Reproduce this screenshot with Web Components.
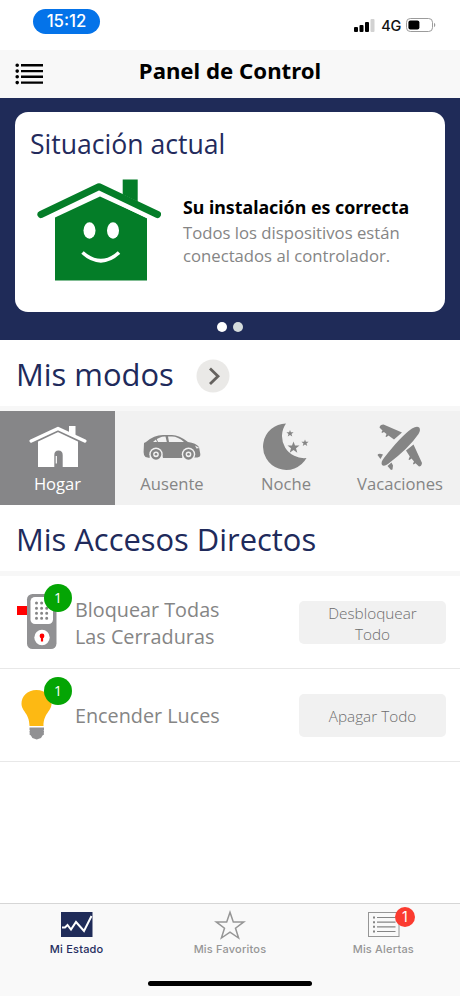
<!DOCTYPE html>
<html lang="es">
<head>
<meta charset="utf-8">
<meta name="viewport" content="width=device-width, initial-scale=1">
<title>Panel de Control</title>
<style>
  body {
    margin: 0;
    background: #fff;
    font-family: "Open Sans", "Noto Sans", sans-serif;
  }
</style>
</head>
<body>
<control-panel></control-panel>

<script>
"use strict";

function define(name, html) {
  const template = document.createElement('template');
  template.innerHTML = html;
  window.customElements.define(name, class extends HTMLElement {
    constructor() {
      super();
      this.attachShadow({ mode: 'open' });
      this.shadowRoot.appendChild(template.content.cloneNode(true));
    }
  });
}

define('status-bar', `
<style>
  :host {
    display: flex;
    justify-content: space-between;
    box-sizing: border-box;
    height: 50px;
    padding: 9px 24px 0 33px;
    font-family: Inter, sans-serif;
  }
  .time {
    width: 67px;
    height: 25px;
    border-radius: 13px;
    background: #0473e9;
    color: #fff;
    font-size: 16.8px;
    font-weight: 500;
    line-height: 25px;
    text-align: center;
  }
  .signals {
    display: flex;
    align-items: center;
    height: 33px;
    color: #111;
    font-size: 14.5px;
    font-weight: 500;
  }
  .signals svg { margin-bottom: 1px; }
  .network { margin: 0 5px 0 6px; letter-spacing: -0.3px; }
</style>
<div class="time">15:12</div>
<div class="signals">
  <svg width="21" height="13" viewBox="0 0 21 13">
    <rect x="0" y="8" width="4" height="5" rx="1"/>
    <rect x="5.5" y="6" width="4" height="7" rx="1"/>
    <rect x="11" y="3" width="4" height="10" rx="1"/>
    <rect x="16.5" y="0" width="4" height="13" rx="1" fill="#d2d2d2"/>
  </svg>
  <span class="network">4G</span>
  <svg width="30" height="14" viewBox="0 0 30 14">
    <rect x="0.5" y="0.5" width="26" height="13" rx="3.8" fill="none" stroke="#9b9b9b"/>
    <rect x="2.4" y="2.4" width="11" height="9.2" rx="2"/>
    <path d="M28 4.8v4.4c1.8-.7 1.8-3.7 0-4.4z" fill="#9b9b9b"/>
  </svg>
</div>
`);

define('nav-bar', `
<style>
  :host {
    display: grid;
    grid-template-columns: 44px 1fr 44px;
    align-items: center;
    height: 48px;
    background: #f8f8f8;
    color: #000;
  }
  svg { margin: 0 0 1px 15px; }
  h1 {
    margin: 0;
    padding-bottom: 6px;
    font-family: "Noto Sans", sans-serif;
    font-size: 22.2px;
    font-weight: 700;
    line-height: 30px;
    text-align: center;
    white-space: nowrap;
  }
</style>
<svg width="29" height="22" viewBox="0 0 29 22">
  <g stroke="#000" stroke-width="2.4">
    <path d="M6 2.3h22M6 8.1h22M6 13.8h22M6 19.6h22"/>
    <path d="M2.2 2.3h.01M2.2 8.1h.01M2.2 13.8h.01M2.2 19.6h.01" stroke-width="3.6" stroke-linecap="round"/>
  </g>
</svg>
<h1><slot></slot></h1>
`);

define('status-card', `
<style>
  :host {
    display: flex;
    flex-direction: column;
    align-items: center;
    box-sizing: border-box;
    height: 242px;
    padding: 14px 15px 0;
    background: #1f2b58;
  }
  .card {
    box-sizing: border-box;
    width: 100%;
    height: 200px;
    padding: 12px 15px 0;
    border-radius: 13px;
    background: #fff;
  }
  h2 {
    margin: 0;
    color: #232a5c;
    font-size: 26.6px;
    font-weight: 400;
    line-height: 40px;
  }
  .content {
    display: flex;
    padding: 15px 0 0 7px;
  }
  .text {
    padding: 17px 0 0 22px;
    color: #858585;
    font-size: 16.7px;
    line-height: 23px;
    white-space: nowrap;
  }
  .title {
    padding-bottom: 2px;
    color: #000;
    font-family: "Noto Sans", sans-serif;
    font-size: 17.8px;
    font-weight: 700;
  }
  .pages {
    display: flex;
    gap: 6px;
    margin-top: 10px;
  }
  .pages i {
    width: 10px;
    height: 10px;
    border-radius: 50%;
    background: #d5dcdc;
  }
  .pages .current { background: #fff; }
</style>
<div class="card">
  <h2><slot name="heading"></slot></h2>
  <div class="content">
    <svg width="124" height="103" viewBox="0 0 124 103">
      <path d="M18 38.5L63 17.500L110 39v62.500H18z" fill="#047d28"/>
      <path d="M4 36.500L62 8.200L120 36.500" fill="none" stroke="#fff" stroke-width="14"/>
      <path d="M85.700.500h15v22l-15-7z" fill="#047d28"/>
      <path d="M3.900 35.500L62 7.700L120.500 35.500" fill="none" stroke="#047d28" stroke-width="7" stroke-linecap="round" stroke-linejoin="round"/>
      <g fill="#fff">
        <ellipse cx="52.500" cy="51.500" rx="6" ry="8.200"/>
        <ellipse cx="76" cy="51.500" rx="6" ry="8.200"/>
      </g>
      <path d="M45.500 73.500Q64 90 82 73.500" fill="none" stroke="#fff" stroke-width="3.600"/>
    </svg>
    <div class="text">
      <div class="title"><slot name="title"></slot></div>
      <slot></slot>
    </div>
  </div>
</div>
<div class="pages"><i class="current"></i><i></i></div>
`);

define('section-heading', `
<style>
  :host {
    display: flex;
    align-items: center;
    box-sizing: border-box;
    height: 71px;
    padding: 1px 16px 0;
    border-bottom: 5px solid #f7f7f7;
    color: #202a5b;
  }
  h2 {
    margin: 0;
    font-size: 30.9px;
    font-weight: 400;
    line-height: 44px;
    white-space: nowrap;
  }
</style>
<h2><slot></slot></h2>
<slot name="action"></slot>
`);

define('round-arrow', `
<style>
  :host {
    display: block;
    width: 34px;
    height: 34px;
    margin: 4px 0 0 22px;
  }
  svg { display: block; }
</style>
<svg width="34" height="34" viewBox="0 0 34 34">
  <circle cx="17" cy="17" r="16.500" fill="#eae9e7"/>
  <path d="M14 9.500L22 17.200L14 25" fill="none" stroke="#65625f" stroke-width="2.800"/>
</svg>
`);

define('mode-list', `
<style>
  :host {
    display: grid;
    grid-template-columns: 115px 114px 114px 114px;
    height: 94px;
    background: #f1f1f1;
  }
</style>
<slot></slot>
`);

define('mode-item', `
<style>
  :host {
    display: flex;
    flex-direction: column;
    align-items: center;
    padding-top: 10px;
    color: #858585;
    font-size: 16.6px;
    line-height: 24px;
  }
  :host([active]) {
    background: #868688;
    color: #fff;
  }
  .icon {
    height: 51px;
  }
</style>
<div class="icon"><slot name="icon"></slot></div>
<slot></slot>
`);

define('shortcut-row', `
<style>
  :host {
    display: grid;
    grid-template-columns: 75px 1fr 147px;
    align-items: center;
    box-sizing: border-box;
    height: 93px;
    padding-right: 14px;
    border-bottom: 1px solid #e8e8e8;
    color: #858585;
  }
  .icon {
    position: relative;
    align-self: start;
    height: 92px;
  }
  .badge {
    position: absolute;
    left: 44px;
    top: 8px;
    width: 28px;
    height: 28px;
    border-radius: 50%;
    background: #04a504;
    color: #fff;
    font-size: 14px;
    line-height: 28px;
    text-align: center;
  }
  .label {
    padding-top: 1px;
    font-size: 19.800px;
    font-weight: 400;
    line-height: 27px;
  }
  button {
    height: 43px;
    padding: 2px 20px 0;
    border: none;
    border-radius: 5px;
    background: #f1f1f1;
    color: #6d6d6d;
    font-family: inherit;
    font-size: 15.300px;
    font-weight: 300;
    line-height: 21px;
  }
</style>
<div class="icon"><slot name="icon"></slot><div class="badge">1</div></div>
<div class="label"><slot></slot></div>
<button><slot name="action"></slot></button>
`);

define('tab-bar', `
<style>
  :host {
    display: flex;
    flex-direction: column;
    align-items: center;
    box-sizing: border-box;
    height: 93px;
    border-top: 1px solid #d6d6d6;
    background: #f9f9f9;
  }
  .tabs {
    display: grid;
    grid-template-columns: repeat(3, 1fr);
    width: 100%;
    height: 77px;
  }
  .home {
    width: 164px;
    height: 5px;
    border-radius: 3px;
    background: #000;
  }
</style>
<div class="tabs"><slot></slot></div>
<div class="home"></div>
`);

define('tab-item', `
<style>
  :host {
    display: flex;
    flex-direction: column;
    align-items: center;
    padding-top: 6px;
    color: #969696;
    font-family: Inter, sans-serif;
    font-size: 11px;
    font-weight: 500;
    letter-spacing: 0.200px;
    line-height: 14px;
  }
  :host([active]) { color: #252d60; }
  .icon {
    position: relative;
    height: 32px;
  }
  ::slotted([slot="badge"]) {
    position: absolute;
    left: 28px;
    top: -3px;
    width: 20px;
    height: 20px;
    border-radius: 50%;
    background: #fb3b30;
    color: #fff;
    font-size: 14px;
    font-weight: 400;
    letter-spacing: 0;
    line-height: 20px;
    text-align: center;
  }
</style>
<div class="icon"><slot name="icon"></slot><slot name="badge"></slot></div>
<slot></slot>
`);

define('control-panel', `
<style>
  :host {
    display: flex;
    flex-direction: column;
    height: 996px;
    overflow: hidden;
  }
  svg { display: block; }
  .shortcuts { flex: 1; }
</style>
<status-bar></status-bar>
<nav-bar>Panel de Control</nav-bar>
<status-card>
  <span slot="heading">Situación actual</span>
  <span slot="title">Su instalación es correcta</span>
  Todos los dispositivos están<br>conectados al controlador.
</status-card>

<section-heading>Mis modos<round-arrow slot="action"></round-arrow></section-heading>
<mode-list>
  <mode-item active>
    <svg slot="icon" width="58" height="50" viewBox="0 0 58 50">
      <path d="M9 19L29 9.500L49 19v27H33.700V34q0-4.500-4.200-4.500T25.300 34v12H9z" fill="#fff"/>
      <path d="M2 20.500L29 7.800L56 20.500" fill="none" stroke="#868688" stroke-width="6"/>
      <path d="M40 5h6.500v11L40 13z" fill="#fff"/>
      <path d="M2.200 20L29 7.500L55.800 20" fill="none" stroke="#fff" stroke-width="3.400" stroke-linecap="round" stroke-linejoin="round"/>
      <path d="M27.300 35v7.500" stroke="#fff" stroke-width="1.200"/>
    </svg>
    Hogar
  </mode-item>
  <mode-item>
    <svg slot="icon" width="58" height="50" viewBox="0 0 58 50">
      <path d="M1 22L3 21Q11 14 20 14h9q7 0 16 7 8 1 11 5l1.300 7q.500 3-3 3.500h-3.500A6.700 6.700 0 0 0 39 37H20A6.700 6.700 0 0 0 6.500 37L2.500 36Q.500 34.500.600 31z" fill="#858585"/>
      <path d="M10 21Q16 15.300 22.500 15.500L23.800 21zM25 15.500h4q6 0 12 5.500H26z" fill="#f1f1f1"/>
      <path d="M12.500 16.500L14.500 21M52 25.500l4 2.500" stroke="#858585"/>
      <path d="M52 24.500l4.500 2.500-3 .5z" fill="#f1f1f1"/>
      <circle cx="13" cy="33.300" r="6.700" fill="#f1f1f1"/>
      <circle cx="45.500" cy="33.300" r="6.700" fill="#f1f1f1"/>
      <circle cx="13" cy="33.300" r="4.100" fill="none" stroke="#858585" stroke-width="2.500"/>
      <circle cx="45.500" cy="33.300" r="4.100" fill="none" stroke="#858585" stroke-width="2.500"/>
      <circle cx="13" cy="33.300" r="1.300" fill="#858585"/>
      <circle cx="45.500" cy="33.300" r="1.300" fill="#858585"/>
    </svg>
    Ausente
  </mode-item>
  <mode-item>
    <svg slot="icon" width="46" height="50" viewBox="0 0 46 50" fill="#858585">
      <path d="M23 2.500A23.200 23.200 0 1 0 43.500 37A22 22 0 0 1 23 2.500z"/>
      <path d="M0-6L1.500-2H6L2.500.800L3.800 5.200L0 2.600L-3.800 5.200L-2.500.800L-6-2H-1.500z" transform="translate(30.500 26.500)"/>
      <path d="M0-6L1.500-2H6L2.500.800L3.800 5.200L0 2.600L-3.800 5.200L-2.500.800L-6-2H-1.500z" transform="translate(27 12.500) scale(.6)"/>
      <path d="M0-6L1.500-2H6L2.500.800L3.800 5.200L0 2.600L-3.800 5.200L-2.500.800L-6-2H-1.500z" transform="translate(42 22) scale(.6)"/>
    </svg>
    Noche
  </mode-item>
  <mode-item>
    <svg slot="icon" width="46" height="50" viewBox="0 0 46 50" fill="#858585">
      <path d="M5 44Q3.500 41 7 37Q24 15 35 7.500Q40 4.500 42.200 6.500Q44 9 41.500 13Q32 27 11 43Q7 46 5 44z"/>
      <path d="M2.500 6.500Q3 3.500 6.500 3.500L25 11.500L17 18.500L11.500 14.500 9.500 16 8.500 15.500 9.500 13L7 11 5 12 4.500 11 5.500 9.500z"/>
      <path d="M36.500 23.500L45 42Q44.500 45.500 42 45.500L38.500 42.200 36.500 43.500 36 42.500 37 40.500 34.500 37.500 32.500 39 31.500 38.500 32.800 35.500 29 29.500z"/>
      <path d="M.5 34q1-2 5.500-.500l-2.500 4.500zM10.500 45l4-3.500 1.500 3-.5 4-1.500.5z"/>
    </svg>
    Vacaciones
  </mode-item>
</mode-list>

<section-heading>Mis Accesos Directos</section-heading>
<div class="shortcuts">
  <shortcut-row>
    <svg slot="icon" width="75" height="92" viewBox="0 0 75 92">
      <path d="M17 30h11v9H17z" fill="#f00"/>
      <rect x="27" y="18" width="29.500" height="55" rx="5.500" fill="#919193"/>
      <rect x="30.500" y="21" width="22.500" height="27" rx="4.500" fill="#fff"/>
      <g stroke="#858585" stroke-width="3" stroke-linecap="round" stroke-dasharray="0 5.100">
        <path d="M36.500 27h11M36.500 32.200h11M36.500 37.300h11M36.500 42.200h11"/>
      </g>
      <circle cx="42" cy="61.500" r="7.700" fill="#fff"/>
      <circle cx="42" cy="60" r="2.400" fill="#f00"/>
      <path d="M42 60v5.500" stroke="#f00" stroke-width="2.200"/>
    </svg>
    Bloquear Todas<br>Las Cerraduras
    <span slot="action">Desbloquear<br>Todo</span>
  </shortcut-row>
  <shortcut-row>
    <svg slot="icon" width="75" height="92" viewBox="0 0 75 92">
      <path d="M36.500 21C27 21 21.500 27.500 21.500 34.500C21.500 42.500 29.500 44 29.500 57H43.500C43.500 44 51.500 42.500 51.500 34.500C51.500 27.500 46 21 36.500 21z" fill="#fdb913"/>
      <path d="M29.500 58.500H44v7l-1.500 1-1.500 2.500-4.300 1.500-4.300-1.500-1.500-2.500-1.400-1z" fill="#919193"/>
      <path d="M29 61.500h1M29 64h1M43.500 61.500h1M43.500 64h1" stroke="#fff" stroke-width=".6"/>
    </svg>
    Encender Luces
    <span slot="action">Apagar Todo</span>
  </shortcut-row>
</div>

<tab-bar>
  <tab-item active>
    <svg slot="icon" width="33" height="30" viewBox="0 0 33 30">
      <path d="M1 2h31.500v25H1z" fill="#1f2b58"/>
      <path d="M2 17.500h3l2.500-2.500 3.500 4.500 5-7.500 8 9L31.500 6" fill="none" stroke="#fff" stroke-width="2"/>
    </svg>
    Mi Estado
  </tab-item>
  <tab-item>
    <svg slot="icon" width="32" height="30" viewBox="0 0 32 30">
      <path d="M16 2.300L19.300 11.900H29.800L21.500 18.200L24.600 28L16 22.200L7.400 28L10.500 18.200L2.200 11.900H12.700z" fill="none" stroke="#969696" stroke-width="1.500"/>
    </svg>
    Mis Favoritos
  </tab-item>
  <tab-item>
    <svg slot="icon" width="33" height="30" viewBox="0 0 33 30">
      <rect x="1.500" y="2.500" width="30.500" height="24" fill="none" stroke="#969696"/>
      <path d="M10 7.500h18.500M10 12.200h18.500M10 16.800h18.500M10 21.500h18.500" stroke="#858585" stroke-width="1.200"/>
      <path d="M6 7.500h2M6 12.200h2M6 16.800h2M6 21.500h2" stroke="#858585" stroke-width="2"/>
    </svg>
    <span slot="badge">1</span>
    Mis Alertas
  </tab-item>
</tab-bar>
`);
</script>
</body>
</html>
